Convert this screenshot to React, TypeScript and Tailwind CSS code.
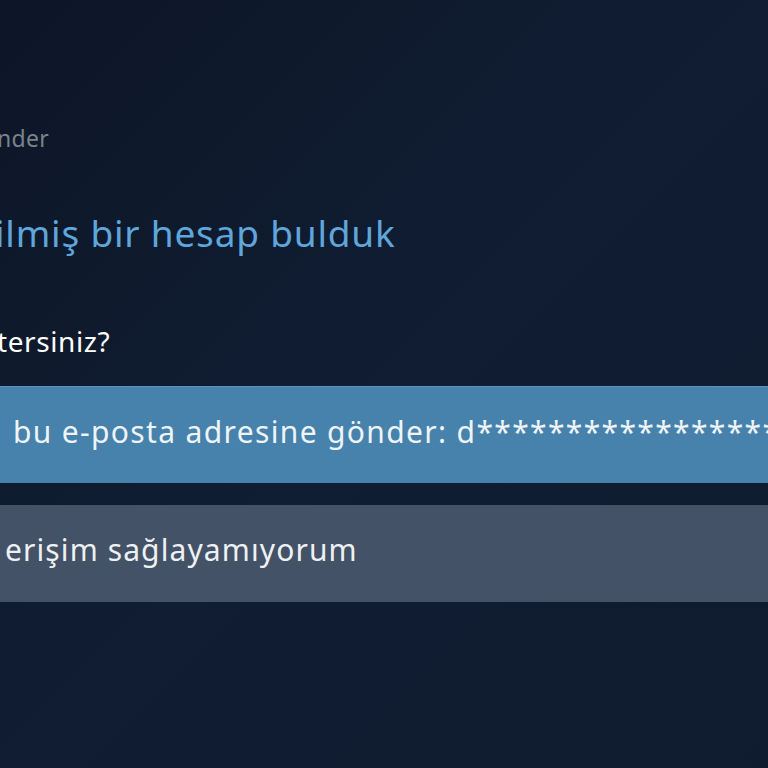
export default function App() {
  return (
    <main
      className="min-h-screen w-full overflow-hidden bg-gradient-to-br from-[#0d1627] via-[#101d33] to-[#0f1b2e] pt-[122px] text-[#e6ebef]"
      style={{ fontFamily: '"Noto Sans", "Open Sans", sans-serif' }}
    >
      <div className="whitespace-nowrap">
        <p className="-ml-[3px] h-[32px] text-[23px] leading-[32px] tracking-[0.3px] text-[#7b838c]">nder</p>

        <h1 className="mt-[57px] -ml-[5px] h-[44px] text-[37px] leading-[44px] font-normal tracking-[0.8px] text-[#5fa6db]">
          ilmiş bir hesap bulduk
        </h1>

        <p className="mt-[68px] -ml-[3px] h-[36px] text-[28px] leading-[36px] tracking-[0.6px] text-white">tersiniz?</p>

        <div className="mt-[27px] flex flex-col gap-[22px]">
          <button className="flex h-[97px] w-[800px] items-center overflow-hidden border-t border-[#5b95bd] bg-[#4682ab] pb-[8px] text-left text-[30px] tracking-[1.35px] text-[#eef4f8]">
            <span className="-ml-[17px]">u</span>
            <span className="ml-[10px]">bu e-posta adresine gönder: d*******************************</span>
          </button>
          <button className="flex h-[97px] w-[800px] items-center overflow-hidden bg-[#435266] pb-[8px] text-left text-[30px] tracking-[1.1px] text-[#eef1f4]">
            <span className="ml-[5px]">erişim sağlayamıyorum</span>
          </button>
        </div>
      </div>
    </main>
  );
}
